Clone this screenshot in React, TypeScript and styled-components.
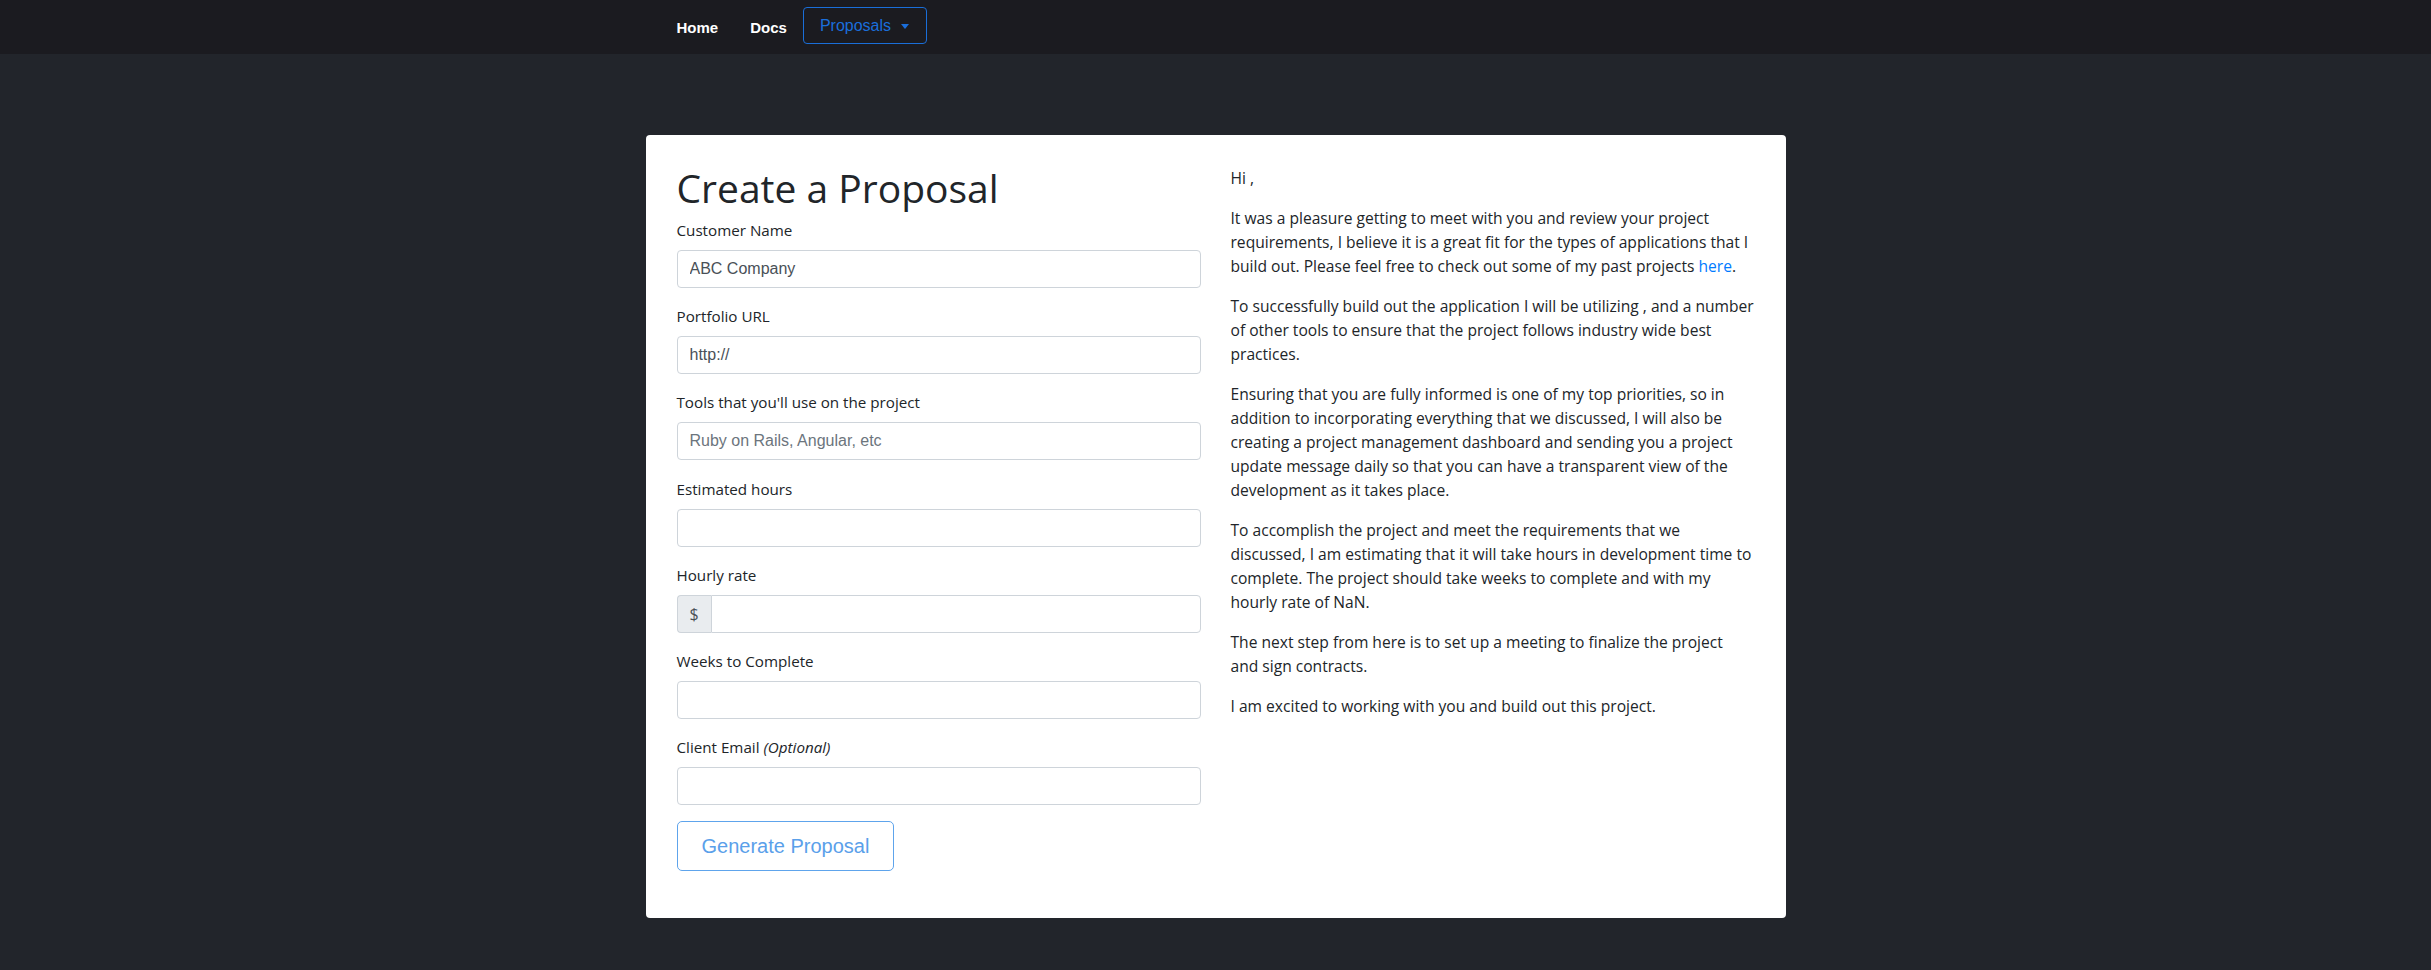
import React from 'react';
import styled, { createGlobalStyle } from 'styled-components';

const GlobalStyle = createGlobalStyle`
  html, body {
    margin: 0;
    padding: 0;
    background: #22252b;
  }
  body {
    font-family: "Open Sans", "Noto Sans", sans-serif;
    color: #212529;
  }
  * {
    box-sizing: border-box;
  }
`;

const Page = styled.div`
  min-height: 100vh;
  background: #22252b;
`;

const NavBar = styled.nav`
  height: 54px;
  background: #1b1b20;
`;

const NavInner = styled.div`
  width: 1140px;
  height: 100%;
  margin: 0 auto;
  padding: 7px 15px 10px;
  display: flex;
  align-items: center;
`;

const NavLink = styled.a`
  padding: 4px 16px 0;
  color: #ffffff;
  font-family: "Liberation Sans", Arial, sans-serif;
  font-weight: 700;
  font-size: 15px;
  text-decoration: none;
`;

const DropdownButton = styled.button`
  height: 37px;
  display: flex;
  align-items: center;
  padding: 0 17px 0 16px;
  background: transparent;
  border: 1px solid #1a6ed8;
  border-radius: 4px;
  color: #1a6edb;
  font-family: "Liberation Sans", Arial, sans-serif;
  font-size: 16px;
`;

const Caret = styled.span`
  display: inline-block;
  margin-left: 10px;
  margin-top: 1px;
  border-top: 5px solid currentColor;
  border-left: 4px solid transparent;
  border-right: 4px solid transparent;
`;

const Card = styled.main`
  width: 1140px;
  margin: 81px auto 0;
  padding: 16px;
  background: #ffffff;
  border-radius: 4px;
  display: grid;
  grid-template-columns: 1fr 1fr;
`;

const Column = styled.section`
  padding: 15px;
  min-width: 0;
`;

const Title = styled.h1`
  margin: 0 0 8px;
  font-size: 39px;
  line-height: 44px;
  font-weight: 400;
  color: #212529;
`;

const Form = styled.form`
  margin-bottom: 16px;
`;

const FormGroup = styled.div`
  margin-bottom: 16.2px;
`;

const Label = styled.label`
  display: block;
  margin-bottom: 8px;
  font-size: 15.2px;
  line-height: 24px;
  color: #212529;

  em {
    font-style: italic;
  }
`;

const Input = styled.input<{ $joined?: boolean }>`
  display: block;
  width: 100%;
  height: 38px;
  padding: 6px 12px;
  border: 1px solid #ced4da;
  border-radius: ${(p) => (p.$joined ? '0 4px 4px 0' : '4px')};
  background: #ffffff;
  color: #495057;
  font-family: "Liberation Sans", Arial, sans-serif;
  font-size: 16px;
  outline: none;

  &::placeholder {
    color: #6c757d;
  }
`;

const InputGroup = styled.div`
  display: flex;
`;

const Addon = styled.span`
  display: flex;
  align-items: center;
  justify-content: center;
  width: 34px;
  height: 38px;
  flex-shrink: 0;
  background: #e9ecef;
  border: 1px solid #ced4da;
  border-right: none;
  border-radius: 4px 0 0 4px;
  color: #495057;
  font-size: 16px;
`;

const SubmitButton = styled.button`
  height: 50px;
  padding: 0 24px;
  background: #ffffff;
  border: 1px solid #5ea4ec;
  border-radius: 5px;
  color: #5aa0ea;
  font-family: "Liberation Sans", Arial, sans-serif;
  font-size: 20px;
`;

const Paragraph = styled.p`
  margin: 0 0 16px;
  font-size: 15.6px;
  line-height: 24px;
  white-space: nowrap;
  color: #212529;
`;

const Link = styled.a`
  color: #007bff;
  text-decoration: none;
`;

type Field = {
  label: React.ReactNode;
  value?: string;
  placeholder?: string;
  prefix?: string;
};

const fields: Field[] = [
  { label: 'Customer Name', value: 'ABC Company' },
  { label: 'Portfolio URL', value: 'http://' },
  { label: "Tools that you'll use on the project", placeholder: 'Ruby on Rails, Angular, etc' },
  { label: 'Estimated hours' },
  { label: 'Hourly rate', prefix: '$' },
  { label: 'Weeks to Complete' },
  {
    label: (
      <>
        Client Email <em>(Optional)</em>
      </>
    ),
  },
];

function App() {
  return (
    <Page>
      <GlobalStyle />
      <NavBar>
        <NavInner>
          <NavLink href="#">Home</NavLink>
          <NavLink href="#">Docs</NavLink>
          <DropdownButton type="button">
            Proposals
            <Caret />
          </DropdownButton>
        </NavInner>
      </NavBar>

      <Card>
        <Column>
          <Title>Create a Proposal</Title>
          <Form onSubmit={(e) => e.preventDefault()}>
            {fields.map((f, i) => (
              <FormGroup key={i}>
                <Label>{f.label}</Label>
                {f.prefix ? (
                  <InputGroup>
                    <Addon>{f.prefix}</Addon>
                    <Input $joined defaultValue={f.value} placeholder={f.placeholder} />
                  </InputGroup>
                ) : (
                  <Input defaultValue={f.value} placeholder={f.placeholder} />
                )}
              </FormGroup>
            ))}
            <SubmitButton type="submit">Generate Proposal</SubmitButton>
          </Form>
        </Column>

        <Column>
          <Paragraph>Hi ,</Paragraph>
          <Paragraph>
            It was a pleasure getting to meet with you and review your project
            <br />
            requirements, I believe it is a great fit for the types of applications that I
            <br />
            build out. Please feel free to check out some of my past projects <Link href="#">here</Link>.
          </Paragraph>
          <Paragraph>
            To successfully build out the application I will be utilizing , and a number
            <br />
            of other tools to ensure that the project follows industry wide best
            <br />
            practices.
          </Paragraph>
          <Paragraph>
            Ensuring that you are fully informed is one of my top priorities, so in
            <br />
            addition to incorporating everything that we discussed, I will also be
            <br />
            creating a project management dashboard and sending you a project
            <br />
            update message daily so that you can have a transparent view of the
            <br />
            development as it takes place.
          </Paragraph>
          <Paragraph>
            To accomplish the project and meet the requirements that we
            <br />
            discussed, I am estimating that it will take hours in development time to
            <br />
            complete. The project should take weeks to complete and with my
            <br />
            hourly rate of NaN.
          </Paragraph>
          <Paragraph>
            The next step from here is to set up a meeting to finalize the project
            <br />
            and sign contracts.
          </Paragraph>
          <Paragraph>I am excited to working with you and build out this project.</Paragraph>
        </Column>
      </Card>
    </Page>
  );
}

export default App;
